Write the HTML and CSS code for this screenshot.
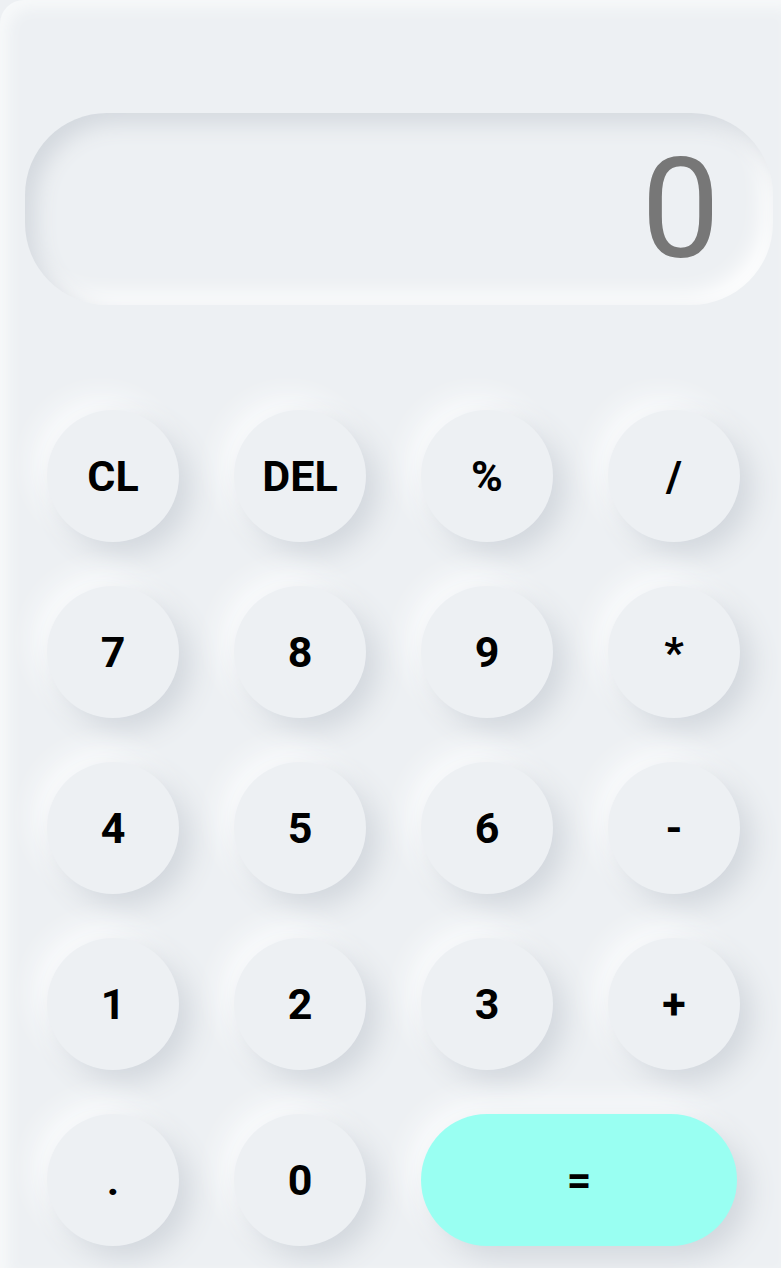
FILE: index.html
```html
<!DOCTYPE html>
<html lang="en">
<head>
  <meta charset="UTF-8" />
  <meta name="viewport" content="width=device-width, initial-scale=1.0"/>
  <title>Calculator</title>
  <link rel="stylesheet" href="styles.css">
</head>
<body>

  <div class="calculator">
    <div class="display" id="display">0</div>

    <div class="keys">
      <button class="key">CL</button>
      <button class="key">DEL</button>
      <button class="key">%</button>
      <button class="key">/</button>

      <button class="key">7</button>
      <button class="key">8</button>
      <button class="key">9</button>
      <button class="key">*</button>

      <button class="key">4</button>
      <button class="key">5</button>
      <button class="key">6</button>
      <button class="key">-</button>

      <button class="key">1</button>
      <button class="key">2</button>
      <button class="key">3</button>
      <button class="key">+</button>

      <button class="key">.</button>
      <button class="key">0</button>
      <button class="key equal">=</button>
    </div>
  </div>

</body>
</html>
```

FILE: styles.css
```css
html, body {
  margin: 0;
  padding: 0;
  overflow: hidden;
}

body {
  font-family: Roboto, 'Liberation Sans', sans-serif;
  background-color: #edf0f3;
}

.calculator {
  width: 100%;
  height: 1268px;
  padding: 113px 0 0 25px;
  box-sizing: border-box;
  background-color: #edf0f3;
  border-top-left-radius: 24px;
  box-shadow: inset 8px 8px 14px #f7f9fa;
}

.display {
  width: 748px;
  height: 192px;
  border-radius: 82px;
  box-sizing: border-box;
  padding-right: 53px;
  display: flex;
  align-items: center;
  justify-content: flex-end;
  font-size: 140px;
  line-height: 1;
  color: #777;
  box-shadow: inset 10px 10px 22px #d3d8de, inset -10px -10px 22px #ffffff;
}

.keys {
  margin: 105px 0 0 22px;
  display: grid;
  grid-template-columns: repeat(4, 132px);
  grid-auto-rows: 132px;
  column-gap: 55px;
  row-gap: 44px;
}

.key {
  border: none;
  border-radius: 50%;
  background-color: #edf0f3;
  font-family: Roboto, 'Liberation Sans', sans-serif;
  font-weight: 700;
  font-size: 43px;
  color: #000;
  padding: 0;
  cursor: pointer;
  box-shadow: 12px 12px 28px #d2d7dd, -12px -12px 28px #fbfcfd;
}

.key.equal {
  grid-column: span 2;
  width: 316px;
  border-radius: 66px;
  background-color: #99fff2;
}
```
